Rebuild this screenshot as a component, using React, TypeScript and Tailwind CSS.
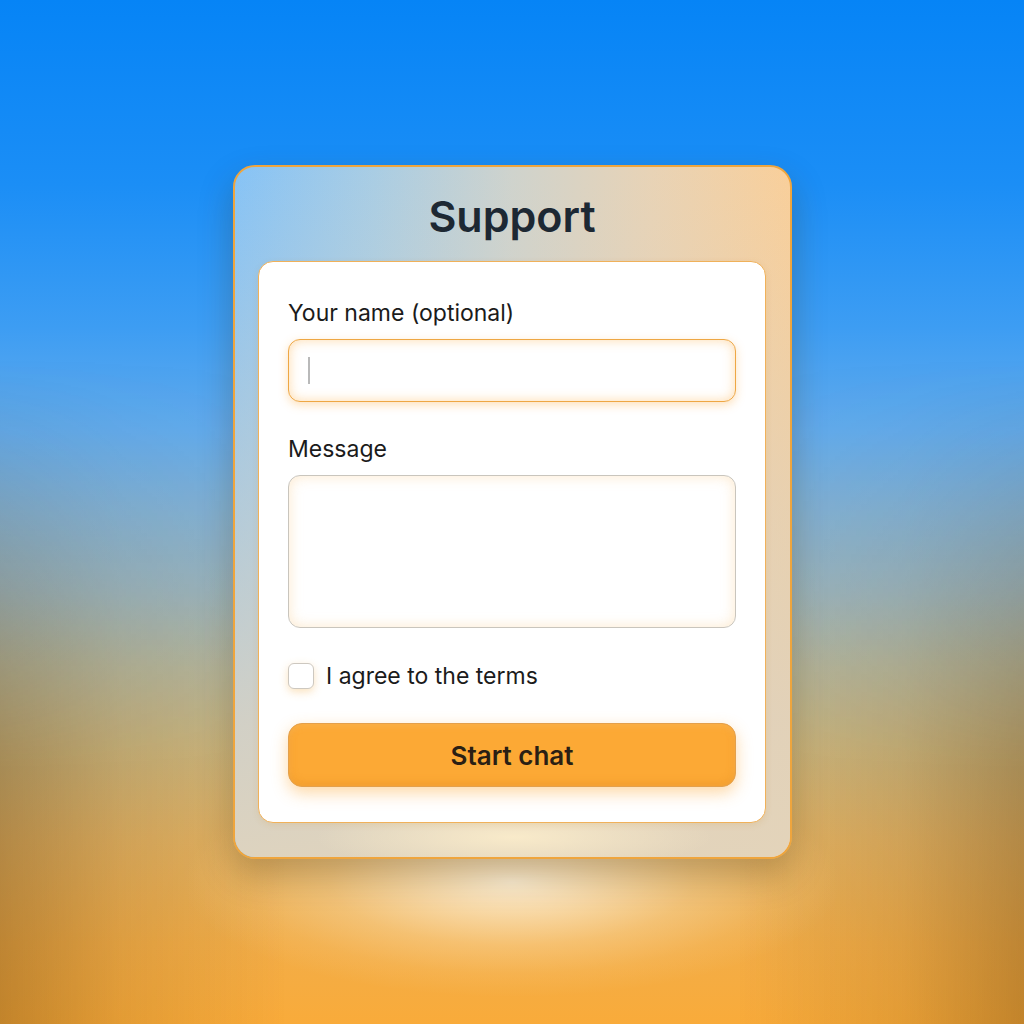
import React from "react";

export default function App() {
  return (
    <div
      className="relative w-[1024px] h-[1024px] overflow-hidden flex flex-col items-center"
      style={{ fontFamily: "Inter, 'Noto Sans', sans-serif" }}
    >
      <div className="absolute inset-0 bg-[linear-gradient(180deg,#0684f6_0%,#1b8ef6_18%,#3d9df3_32%,#62abec_42%,#82b1d4_50%,#9bb4bc_58%,#b4b69d_65%,#cbb67f_73%,#e2b263_82%,#f2ad48_92%,#f9ab3a_100%)]" />
      <div className="absolute inset-0 bg-[linear-gradient(90deg,rgba(80,50,10,0.32)_0%,rgba(80,50,10,0.12)_12%,rgba(0,0,0,0)_28%,rgba(0,0,0,0)_72%,rgba(80,50,10,0.12)_88%,rgba(80,50,10,0.32)_100%)] [mask-image:linear-gradient(180deg,transparent_35%,black_75%,black_100%)]" />
      <div className="absolute left-[182px] top-[790px] w-[660px] h-[230px] bg-[radial-gradient(ellipse_50%_50%_at_50%_40%,rgba(255,248,232,0.85)_0%,rgba(255,244,222,0.62)_25%,rgba(255,238,205,0.3)_55%,rgba(255,232,190,0.1)_80%,rgba(255,232,190,0)_100%)]" />

      <div className="relative mt-[165px] w-[559px] h-[694px] rounded-[22px] border-[2.5px] border-[#efa53d] shadow-[0_16px_34px_rgba(70,45,10,0.28)] bg-[linear-gradient(90deg,#86c3f6_0%,#a9cde4_25%,#cfd3cd_50%,#e8d3b6_75%,#f9cf9a_100%)] overflow-hidden flex flex-col items-center">
        <div className="absolute inset-0 bg-[linear-gradient(180deg,rgba(218,210,194,0)_0%,rgba(218,210,194,0.15)_15%,rgba(218,210,194,0.55)_50%,rgba(222,210,190,0.85)_80%,rgba(226,212,188,0.95)_100%)]" />
        <div className="absolute left-[80px] bottom-0 w-[398px] h-[50px] bg-[radial-gradient(ellipse_50%_70%_at_50%_60%,rgba(255,240,205,0.8),rgba(255,240,205,0)_100%)]" />
        <h1 className="relative mt-[22px] h-[54px] text-[43px] leading-[54px] font-semibold text-[#1d2833]">
          Support
        </h1>
        <div className="relative mt-[18px] w-[508px] h-[562px] rounded-[15px] bg-white border border-[#f0b15a] shadow-[0_2px_6px_rgba(200,140,50,0.15)] px-[29px] pt-[37px] flex flex-col">
          <div className="text-[23px] leading-[28px] text-[#1b1b1b]">Your name (optional)</div>
          <div className="mt-[12px] h-[63px] rounded-[12px] border-[1.5px] border-[#eea744] bg-white shadow-[inset_0_0_12px_rgba(252,175,70,0.45),0_3px_10px_rgba(252,170,60,0.35)] flex items-center pl-[19px]">
            <div className="w-[1.5px] h-[27px] bg-[#b9b9b9]" />
          </div>
          <div className="mt-[33px] text-[23px] leading-[28px] text-[#1b1b1b]">Message</div>
          <div className="mt-[12px] h-[153px] rounded-[12px] border border-[#c9c5bd] bg-white shadow-[inset_0_0_14px_rgba(250,200,130,0.4)]" />
          <div className="mt-[34px] flex items-center gap-[12px]">
            <div className="w-[26px] h-[26px] rounded-[6px] border border-[#cdc8c0] bg-white shadow-[0_3px_8px_rgba(245,190,110,0.45)]" />
            <span className="text-[23px] leading-[28px] text-[#1b1b1b]">I agree to the terms</span>
          </div>
          <button className="mt-[33px] h-[64px] rounded-[14px] border border-[#e3a04c] bg-[#fca935] shadow-[inset_0_-3px_8px_rgba(210,120,20,0.25),inset_0_2px_6px_rgba(255,200,120,0.4),0_6px_16px_rgba(252,170,60,0.45)] text-[26px] font-semibold text-[#2a1f14] flex items-center justify-center">
            Start chat
          </button>
        </div>
      </div>
    </div>
  );
}
